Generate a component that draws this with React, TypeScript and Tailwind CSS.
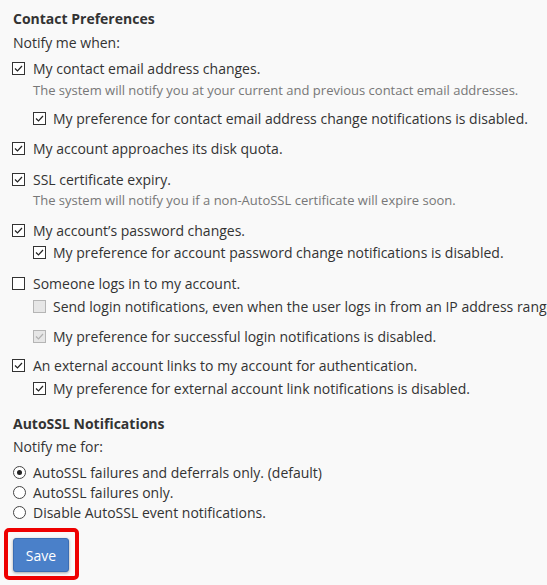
import React from "react";

function Check({ checked, disabled }: { checked?: boolean; disabled?: boolean }) {
  return (
    <span
      className={
        "flex h-[13px] w-[13px] shrink-0 items-center justify-center border " +
        (disabled ? "border-[#b5b5b5] bg-[#e6e6e6]" : "border-[#333333] bg-white")
      }
    >
      {checked && (
        <svg width="11" height="11" viewBox="0 0 11 11">
          <path
            d="M2 5.5 L4.5 8 L9 3"
            fill="none"
            stroke={disabled ? "#b0b0b0" : "#222"}
            strokeWidth="1.2"
          />
        </svg>
      )}
    </span>
  );
}

function Radio({ checked }: { checked?: boolean }) {
  return (
    <span className="flex h-[13px] w-[13px] shrink-0 items-center justify-center rounded-full border border-[#444] bg-white">
      {checked && <span className="h-[5px] w-[5px] rounded-full bg-[#222]" />}
    </span>
  );
}

function Row({
  mt,
  sub,
  checked,
  disabled,
  children,
}: {
  mt: string;
  sub?: boolean;
  checked?: boolean;
  disabled?: boolean;
  children: React.ReactNode;
}) {
  return (
    <div
      className={
        "flex h-[20px] items-center whitespace-nowrap " +
        mt +
        (sub ? " gap-[7px] pl-[21px]" : " gap-[8px]")
      }
    >
      <Check checked={checked} disabled={disabled} />
      <span className="text-[14px] text-[#333]">{children}</span>
    </div>
  );
}

function Desc({ mt, children }: { mt: string; children: React.ReactNode }) {
  return (
    <div className={"flex h-[20px] items-center whitespace-nowrap pl-[21px] text-[13px] text-[#777] " + mt}>
      {children}
    </div>
  );
}

function RadioRow({ checked, children }: { checked?: boolean; children: React.ReactNode }) {
  return (
    <div className="flex h-[20px] items-center gap-[7px] whitespace-nowrap pl-[1px]">
      <Radio checked={checked} />
      <span className="text-[14px] text-[#333]">{children}</span>
    </div>
  );
}

export default function App() {
  return (
    <div
      className="h-[585px] w-[547px] overflow-hidden bg-[#f9f9f9] pl-[12px] pt-[8px]"
      style={{ fontFamily: '"Open Sans", "Noto Sans", sans-serif' }}
    >
      <div className="flex h-[20px] items-center pl-[1px] text-[14px] font-bold text-[#333]">Contact Preferences</div>
      <div className="mt-[4px] flex h-[20px] items-center pl-[1px] text-[14px] text-[#333]">Notify me when:</div>

      <Row mt="mt-[6px]" checked>My contact email address changes.</Row>
      <Desc mt="mt-[3px]">The system will notify you at your current and previous contact email addresses.</Desc>
      <Row mt="mt-[7px]" sub checked>My preference for contact email address change notifications is disabled.</Row>

      <Row mt="mt-[10px]" checked>My account approaches its disk quota.</Row>
      <Row mt="mt-[11px]" checked>SSL certificate expiry.</Row>
      <Desc mt="mt-[2px]">The system will notify you if a non-AutoSSL certificate will expire soon.</Desc>

      <Row mt="mt-[9px]" checked>My account’s password changes.</Row>
      <Row mt="mt-[2px]" sub checked>My preference for account password change notifications is disabled.</Row>

      <Row mt="mt-[11px]">Someone logs in to my account.</Row>
      <Row mt="mt-[3px]" sub disabled>
        Send login notifications, even when the user logs in from an IP address range or netblock that contains an IP address from which a user successfully logged in previously.
      </Row>
      <Row mt="mt-[10px]" sub disabled checked>My preference for successful login notifications is disabled.</Row>

      <Row mt="mt-[9px]" checked>An external account links to my account for authentication.</Row>
      <Row mt="mt-[3px]" sub checked>My preference for external account link notifications is disabled.</Row>

      <div className="mt-[15px] flex h-[20px] items-center pl-[1px] text-[14px] font-bold text-[#333]">AutoSSL Notifications</div>
      <div className="mt-[3px] flex h-[20px] items-center pl-[1px] text-[14px] text-[#333]">Notify me for:</div>

      <div className="mt-[6px]">
        <RadioRow checked>AutoSSL failures and deferrals only. (default)</RadioRow>
        <RadioRow>AutoSSL failures only.</RadioRow>
        <RadioRow>Disable AutoSSL event notifications.</RadioRow>
      </div>

      <div className="-ml-[8px] mt-[6px] inline-flex rounded-[5px] border-[4px] border-[#ee0000] pb-[4px] pl-[5px] pr-[6px] pt-[6px]">
        <button className="h-[34px] w-[56px] rounded-[3px] border border-[#3b6db3] bg-[#4a80c9] text-[14px] text-white shadow-[0_1px_3px_rgba(0,0,0,0.35)]">
          Save
        </button>
      </div>
    </div>
  );
}
